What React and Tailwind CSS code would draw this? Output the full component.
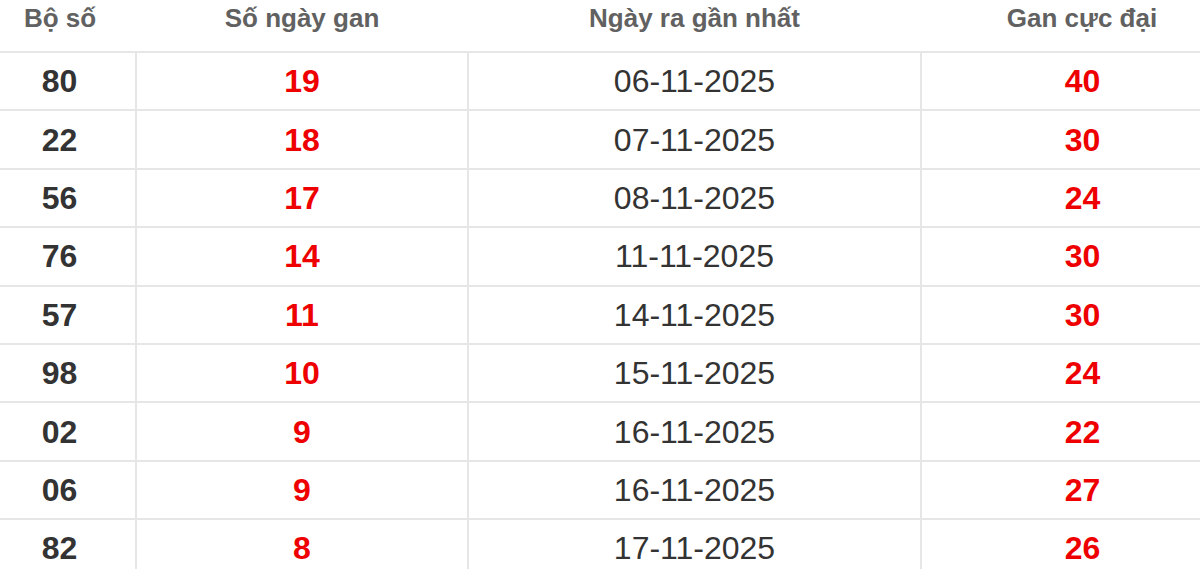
import React from "react";

const rows = [
  ["80", "19", "06-11-2025", "40"],
  ["22", "18", "07-11-2025", "30"],
  ["56", "17", "08-11-2025", "24"],
  ["76", "14", "11-11-2025", "30"],
  ["57", "11", "14-11-2025", "30"],
  ["98", "10", "15-11-2025", "24"],
  ["02", "9", "16-11-2025", "22"],
  ["06", "9", "16-11-2025", "27"],
  ["82", "8", "17-11-2025", "26"],
];

export default function App() {
  return (
    <div className="w-[1200px] h-[569px] overflow-hidden bg-white font-['Liberation_Sans',Arial,sans-serif]">
      <table className="ml-[-16px] w-[1259px] table-fixed border-collapse">
        <colgroup>
          <col className="w-[152px]" />
          <col className="w-[332px]" />
          <col className="w-[453px]" />
          <col className="w-[322px]" />
        </colgroup>
        <thead>
          <tr className="h-[52px] border-b-2 border-[#e6e6e6]">
            {["Bộ số", "Số ngày gan", "Ngày ra gần nhất", "Gan cực đại"].map((h) => (
              <th
                key={h}
                className="align-top pt-[3px] pb-0 text-center text-[26px] leading-[30px] font-bold text-[#616161]"
              >
                {h}
              </th>
            ))}
          </tr>
        </thead>
        <tbody>
          {rows.map((r, i) => (
            <tr key={i} className="h-[58.4px] border-b-2 border-[#e6e6e6]">
              <td className="border-r-2 border-[#e6e6e6] text-center align-middle text-[32px] leading-[36px] font-bold text-[#333333] p-0">
                {r[0]}
              </td>
              <td className="border-r-2 border-[#e6e6e6] text-center align-middle text-[32px] leading-[36px] font-bold text-[#ee0000] p-0">
                {r[1]}
              </td>
              <td className="border-r-2 border-[#e6e6e6] text-center align-middle text-[32px] leading-[36px] text-[#333333] p-0">
                {r[2]}
              </td>
              <td className="text-center align-middle text-[32px] leading-[36px] font-bold text-[#ee0000] p-0">
                {r[3]}
              </td>
            </tr>
          ))}
        </tbody>
      </table>
    </div>
  );
}
